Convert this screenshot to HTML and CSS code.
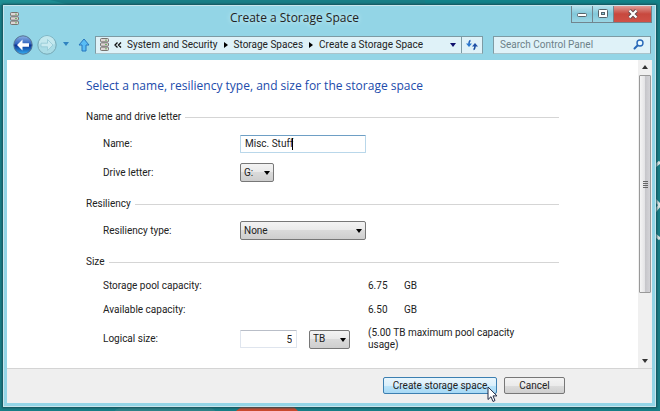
FILE: index.html
```html
<!DOCTYPE html>
<html lang="en">
<head>
<meta charset="utf-8">
<title>Create a Storage Space</title>
<link rel="stylesheet" href="styles.css">
</head>
<body>
<svg class="wallpaper" aria-hidden="true">
  <path d="M0 0H50L70 5H0z" fill="#1f8f94"/>
  <path d="M425 0H660V5H425z" fill="#128289"/>
  <ellipse cx="165" cy="411" rx="50" ry="7" fill="#2e8288"/>
  <path d="M236 411l10-8h44l8 8z" fill="#cb4a2e"/>
  <path d="M655 166l5-4M655 200l5 5-5 6M655 235l5 4" stroke="#dfe7e6" stroke-width="3" fill="none"/>
</svg>
<svg class="defs" aria-hidden="true">
  <symbol id="drives" viewBox="0 0 9 13">
    <g stroke="#77736f"><rect x=".5" y=".5" width="8" height="3.4" rx="1" fill="#ddd5d4"/><rect x=".5" y="4.8" width="8" height="3.4" rx="1" fill="#ddd5d4"/><rect x=".5" y="9.1" width="8" height="3.4" rx="1" fill="#ddd5d4"/></g>
    <path d="M5 2.2h2M5 6.5h2M5 10.8h2" stroke="#6fb36a"/>
  </symbol>
</svg>
<div class="window">
  <header class="titlebar">
    <svg class="drives"><use href="#drives"/></svg>
    <h1>Create a Storage Space</h1>
    <div class="caption">
      <button type="button" aria-label="Minimize"><svg width="12" height="8"><rect x="1.500" y="3.500" width="9" height="3" rx="1" fill="#fff" stroke="#56646b"/></svg></button>
      <button type="button" aria-label="Maximize"><svg width="12" height="10"><rect x="1.500" y=".5" width="9" height="8" rx="1" fill="#fff" stroke="#56646b"/><rect x="4.500" y="3.500" width="3" height="2" fill="#8dcbdc" stroke="#56646b"/></svg></button>
      <button type="button" class="close" aria-label="Close"><svg width="12" height="10"><path d="M2.500 1.500l7 7M9.500 1.500l-7 7" stroke="#634a50" stroke-width="4"/><path d="M2.500 1.500l7 7M9.500 1.500l-7 7" stroke="#fff" stroke-width="2.200"/></svg></button>
    </div>
  </header>
  <nav class="toolbar">
    <button type="button" class="orb" aria-label="Back"><svg viewBox="0 0 20 20"><defs><linearGradient id="blue" x2="0" y2="1"><stop stop-color="#8bb0e4"/><stop offset=".45" stop-color="#2f62bd"/><stop offset=".5" stop-color="#0a2f92"/><stop offset="1" stop-color="#35b0f2"/></linearGradient></defs><circle cx="10" cy="10" r="9.200" fill="url(#blue)" stroke="#54718f"/><path d="M4 10l5.500-5.500v3.700H16v3.600H9.500v3.700z" fill="#fff"/></svg></button>
    <button type="button" class="orb forward" aria-label="Forward"><svg viewBox="0 0 20 20"><circle cx="10" cy="10" r="9.200" fill="#a9dce6" stroke="#76a8b5"/><path d="M2 9a8 8 0 0 1 16 0q-8 3-16 0z" fill="#c3e8ee"/><path d="M16 10l-5.500-5.500v3.700H4v3.600h6.500v3.700z" fill="#c9eaf0" stroke="#93c8d4" stroke-width=".8"/></svg></button>
    <button type="button" class="recent" aria-label="Recent pages"><svg width="8" height="5"><path d="M1 0h6L4 4z" fill="#2f83c0"/></svg></button>
    <button type="button" class="up" aria-label="Up"><svg width="12" height="14"><path d="M6 1l5 6H8v6H4V7H1z" fill="#58bdf5" stroke="#2475bd"/></svg></button>
    <div class="address">
      <svg class="drives"><use href="#drives"/></svg>
      <svg class="chevrons" width="8" height="6"><path d="M3.500 .5L1 3l2.500 2.500M7 .5L4.500 3 7 5.500" fill="none" stroke="#111" stroke-width="1.300"/></svg>
      <a href="#">System and Security</a>
      <svg class="sep" width="4" height="6"><path d="M0 0l4 3-4 3z"/></svg>
      <a href="#">Storage Spaces</a>
      <svg class="sep" width="4" height="6"><path d="M0 0l4 3-4 3z"/></svg>
      <a href="#">Create a Storage Space</a>
      <button type="button" class="history" aria-label="Previous locations"><svg width="6" height="4"><path d="M0 0h6L3 4z" fill="#10106c"/></svg></button>
      <button type="button" class="refresh" aria-label="Refresh"><svg width="12" height="12"><path d="M4.500 1.500Q3 2 3 5" fill="none" stroke="#2463b8" stroke-width="1.500"/><path d="M0 4.500h6L3 8z" fill="#2a78cf"/><path d="M7.500 10.500Q9 10 9 7" fill="none" stroke="#174a9c" stroke-width="1.500"/><path d="M6 7.500h6L9 4z" fill="#1f50a8"/></svg></button>
    </div>
    <label class="search"><input type="text" placeholder="Search Control Panel" aria-label="Search Control Panel"><svg width="11" height="11"><path d="M5 6L1.500 9.500" stroke="#2868b8" stroke-width="2" stroke-linecap="round"/><circle cx="7" cy="4" r="3" fill="#e9faff" stroke="#2868b8" stroke-width="1.400"/></svg></label>
  </nav>
  <form class="client">
    <div class="viewport">
      <main>
        <h2>Select a name, resiliency type, and size for the storage space</h2>
        <section>
          <h3>Name and drive letter</h3>
          <div class="row"><label for="name">Name:</label><span class="field wide caret"><input id="name" type="text" value="Misc. Stuff"></span></div>
          <div class="row"><label for="drive">Drive letter:</label><span class="field drop letter"><select id="drive"><option>G:</option></select></span></div>
        </section>
        <section>
          <h3>Resiliency</h3>
          <div class="row"><label for="type">Resiliency type:</label><span class="field drop wide"><select id="type"><option>None</option></select></span></div>
        </section>
        <section>
          <h3>Size</h3>
          <div class="row short"><span>Storage pool capacity:</span><span class="amount">6.75</span><span>GB</span></div>
          <div class="row short"><span>Available capacity:</span><span class="amount">6.50</span><span>GB</span></div>
          <div class="row tall"><label for="size">Logical size:</label><span class="field number"><input id="size" type="text" value="5"></span><span class="field drop unit"><select aria-label="Unit"><option>TB</option></select></span><span class="note">(5.00 TB maximum pool capacity usage)</span></div>
        </section>
      </main>
      <div class="scrollbar" aria-hidden="true">
        <svg width="6" height="4"><path d="M0 4h6L3 0z" fill="#333"/></svg>
        <div class="thumb"><svg width="5" height="7"><path d="M0 .5h5M0 2.500h5M0 4.500h5M0 6.500h5" stroke="#666"/></svg></div>
        <svg width="6" height="4"><path d="M0 0h6L3 4z" fill="#333"/></svg>
      </div>
    </div>
    <footer>
      <button type="button" class="btn primary">Create storage space<svg class="cursor" width="11" height="17"><path d="M1 1v12.500l3-2.800 2 4.800 2-1-2-4.600h4z" fill="#fff" stroke="#222b45"/></svg></button>
      <button type="button" class="btn">Cancel</button>
    </footer>
  </form>
</div>
</body>
</html>
```
FILE: styles.css
```css
* { box-sizing: border-box; }
body {
  margin: 0;
  min-height: 100vh;
  padding: 5px 4px 4px 3px;
  display: flex;
  background: #187e86;
  font: 10px/12px Roboto, "Noto Sans", sans-serif;
  color: #222;
}
h1, h2, h3 { margin: 0; font-weight: 400; }
svg { display: block; flex: none; }
button, input, select { font: inherit; color: inherit; margin: 0; padding: 0; border: 0; background: none; outline: 0; }
button { display: flex; align-items: center; justify-content: center; }
a { color: inherit; text-decoration: none; }
.wallpaper { position: absolute; inset: 0; width: 100%; height: 100%; z-index: -1; }
.defs { position: absolute; width: 0; height: 0; }
.drives { width: 9px; height: 13px; }

.window {
  flex: 1;
  display: flex;
  flex-direction: column;
  padding: 0 3px 3px;
  background: #93d5e6;
  border: 1px solid #c8e5ec;
  box-shadow: 0 0 2px 1px #164e58;
}
.titlebar { display: grid; grid-template-columns: 223px 1fr auto; height: 29px; align-items: start; }
.titlebar .drives { margin: 6px 0 0 3px; }
h1 { font: 12px/24px "Open Sans", "Noto Sans", sans-serif; text-shadow: 0 0 5px #e2f7fb; }
.caption { display: flex; border: 1px solid #71858e; border-top: 0; }
.caption button { width: 21px; height: 16px; background: linear-gradient(#b5e1ec, #82c8da 50%, #9bd6e4); border-right: 1px solid #71858e; }
.caption .close { width: 37px; border: 0; background: linear-gradient(#df9b95, #c8483e 50%, #cf5147); }

.toolbar { display: flex; align-items: center; height: 19px; margin-bottom: 6px; padding-right: 1px; }
.orb { width: 20px; height: 20px; margin-left: 6px; }
.orb svg { width: 20px; height: 20px; }
.forward { margin-left: 4px; }
.recent { margin-left: 3px; width: 12px; }
.up { margin: 0 5px 0 6px; }
.address, .search { height: 18px; border: 1px solid #7d9ba4; border-bottom-color: #a9c4cb; background: #dff2f8; display: flex; align-items: center; }
.address { flex: 1; padding-left: 4px; }
.chevrons { margin: 0 5px; }
.sep { margin: 0 6px; }
.history { margin-left: auto; width: 16px; height: 16px; }
.refresh { width: 21px; height: 16px; border-left: 1px solid #7d9ba4; }
.search { width: 158px; margin-left: 10px; padding: 0 6px; }
.search input { flex: 1; min-width: 0; }
.search input::placeholder { color: #6d8188; opacity: 1; }

.client { flex: 1; display: flex; flex-direction: column; background: #fff; }
.viewport { flex: 1; display: flex; }
main { flex: 1; padding: 17px 79px 8px 79px; }
h2 { font: 12px/18px "Open Sans", "Noto Sans", sans-serif; color: #214bab; margin-bottom: 16px; }
h3 { font-size: 10px; line-height: 12px; display: flex; align-items: center; gap: 4px; margin-bottom: 6px; }
h3::after { content: ""; flex: 1; height: 1px; background: #d5d5d5; }
section { margin-bottom: 11px; }
section:last-child { margin-bottom: 0; }
.row { display: grid; grid-template-columns: 137px 69px 59px 36px 1fr; align-items: center; height: 29px; padding-left: 17px; }
.short { height: 24px; }
.tall { height: 34px; }
.amount { grid-column: 4; }
.note { grid-column: 4 / 6; max-width: 150px; }
.field { position: relative; height: 18px; display: flex; }
.wide { width: 126px; height: 18px; }
.field input, .field select { width: 100%; height: 100%; border: 1px solid #b9d7ea; border-radius: 1px; }
.wide input { padding-left: 4px; border-top-color: #6e9fc5; }
.number { width: 57px; }
.number input { text-align: right; padding-right: 4px; border-color: #dfe5ee; border-top-color: #b9bec8; }
.caret::after { content: ""; position: absolute; left: 52px; top: 3px; width: 1px; height: 12px; background: #000; }
.field select { appearance: none; padding-left: 3px; border: 1px solid #777; border-radius: 2px; background: linear-gradient(#f3f3f3, #e9e9e9 50%, #dadada 50%, #cecece); }
.drop::after { content: ""; position: absolute; right: 4px; top: 8px; border: 3px solid transparent; border-top: 4px solid #000; border-bottom: 0; pointer-events: none; }
.drop { height: 19px; }
.letter { width: 34px; }
.unit { width: 41px; }

.scrollbar { width: 14px; padding: 5px 1px; background: #f0f0f0; display: flex; flex-direction: column; align-items: center; gap: 6px; }
.thumb { flex: 1; width: 12px; margin-bottom: 60px; display: flex; align-items: center; justify-content: center; border: 1px solid #999; border-radius: 1px; background: linear-gradient(90deg, #f5f5f5, #e3e3e5 50%, #c7c7cb 55%, #d4d4d8); }
footer { display: flex; justify-content: flex-end; gap: 7px; padding: 8px 87px 9px 8px; background: #efefef; border-top: 1px solid #d4d4d4; }
.btn { position: relative; width: 61px; height: 17px; border: 1px solid #777; border-radius: 2px; background: linear-gradient(#f3f3f3, #ebebeb 50%, #dcdcdc 50%, #cfcfcf); }
.primary { width: 114px; border-color: #3c7fb1; background: linear-gradient(#e9f6fd, #d9effb 50%, #bce5fb 50%, #a7d9f5); }
.cursor { position: absolute; left: 103px; top: 8px; z-index: 1; }
```
